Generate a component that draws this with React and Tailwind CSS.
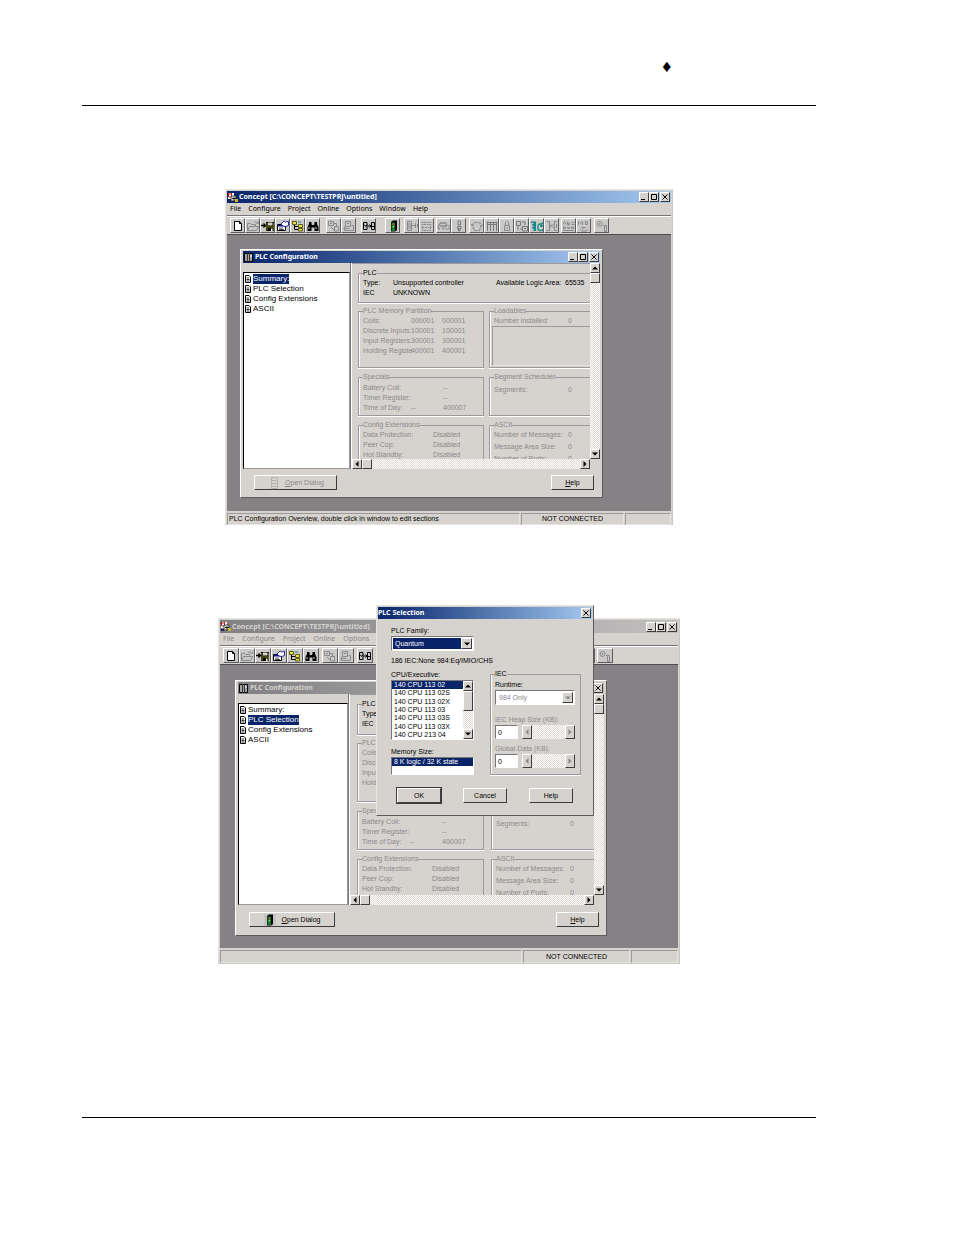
import React, { useState } from 'react';

const sections = ['Summary:', 'PLC Selection', 'Config Extensions', 'ASCII'];
const menus = ['File', 'Configure', 'Project', 'Online', 'Options', 'Window', 'Help'];
const cpus = [
  '140 CPU 113 02',
  '140 CPU 113 02S',
  '140 CPU 113 02X',
  '140 CPU 113 03',
  '140 CPU 113 03S',
  '140 CPU 113 03X',
  '140 CPU 213 04',
];

const raised = 'border border-t-white border-l-white border-r-[#3c3b3d] border-b-[#3c3b3d] bg-[#d6d3ce]';
const toolRaised = 'border border-t-white border-l-white border-r-[#5c5b5f] border-b-[#5c5b5f] bg-[#cbc9c8]';
const sunken = 'border border-t-[#77767a] border-l-[#77767a] border-r-white border-b-white';
const panel = 'border border-t-[#9b999c] border-l-[#9b999c] border-r-[#e6e4e0] border-b-[#e6e4e0]';
const dither = 'bg-[repeating-conic-gradient(#ffffff_0_25%,#dddad5_0_50%)] bg-[length:2px_2px]';

// sizes that differ between the two main windows
const normal = {
  frame: 'mx-[143px]',
  title: 'h-[12px]',
  menu: 'gap-[7px]',
  button: 'w-[15px]',
  gaps: ['', 'ml-[6px]', 'ml-[5px]', 'ml-[9px]', 'ml-[4px]', 'ml-[2px]', 'ml-[3px]', 'ml-[2px]', 'ml-[3px]'],
  desktop: 'pt-[14px] pb-[13px] pl-[13px] pr-[68px]',
  tree: 'w-[107px]',
  panel: 'h-[196px] pl-[6px]',
  plc: 'h-[34px]',
  memory: 'h-[61px]',
  columns: 'grid-cols-[126px_1fr] gap-x-[5px]',
  actions: 'pt-[6px] pb-[6px] pl-[11px] pr-[6px]',
  open: 'w-[83px]',
  status: 'h-[13px] grid-cols-[293px_1fr_46px]',
};

const large = {
  frame: 'mx-[136px]',
  title: 'h-[13px]',
  menu: 'gap-[8px]',
  button: 'w-[16px]',
  gaps: ['', 'ml-[3px]', 'ml-[3px]', 'ml-[6px]', 'ml-[3px]', 'ml-[1px]', 'ml-[2px]', 'ml-[2px]', 'ml-[2px]'],
  desktop: 'pt-[15px] pb-[12px] pl-[15px] pr-[71px]',
  tree: 'w-[110px]',
  panel: 'h-[201px] pl-[7px]',
  plc: 'h-[35px]',
  memory: 'h-[63px]',
  columns: 'grid-cols-[127px_1fr] gap-x-[7px]',
  actions: 'pt-[7px] pb-[7px] pl-[11px] pr-[5px]',
  open: 'w-[86px]',
  status: 'h-[15px] grid-cols-[302px_1fr_47px]',
};

const icons = {
  'New project': (
    <path d="M3.5 1.5h5l2 2v7h-7zM8.5 1.5v2h2" fill="#fff" stroke="#000" />
  ),
  'Open project': (
    <g fill="none" stroke="#8a898c">
      <path d="M1.5 10.5v-7h3l1 1h4v2M1.5 10.5l2-4h9l-2 4z" />
      <path d="M8 2.5c2-1.500 3-.5 3.500 1M12.500 1.500v2h-2" />
    </g>
  ),
  'Save project': (
    <g>
      <path d="M0 5.500h4M2.500 3.500l2 2-2 2" stroke="#000" fill="none" strokeWidth="1.400" />
      <path d="M5 2h8v9H5z" fill="#000" />
      <path d="M7 2.500h4.500v3H7z" fill="#d6d3ce" />
      <path d="M5.500 3v7.500h1V3zM12 3v7.500h.7V3zM6 6.500h6v1H6z" fill="#8a8a1c" />
      <path d="M10 8.500h1.500V11H10z" fill="#fff" />
    </g>
  ),
  Properties: (
    <g>
      <path d="M1.500 4.500h8v6h-8z" fill="#fff" stroke="#000" />
      <path d="M2 5h7v1.500H2z" fill="#14149a" />
      <path d="M3 8h4M3 9.500h5" stroke="#000" strokeWidth=".7" />
      <path d="M5 4l3-3 1.500 1 3-.5v4l-3 1L7 6z" fill="#fff" stroke="#14149a" strokeWidth=".9" />
    </g>
  ),
  'Project browser': (
    <g>
      <path d="M3.500 4v5.500H8M3.500 6.500H8" fill="none" stroke="#000" />
      <path d="M1.500 1.500h4v3h-4z" fill="#e6e04a" stroke="#5d5a14" />
      <path d="M7.500 4.500h4v3h-4zM7.500 8.500h4v2.500h-4z" fill="#e6e04a" stroke="#5d5a14" />
      <path d="M7 2h3" stroke="#148a8a" />
    </g>
  ),
  Search: (
    <g fill="#000">
      <path d="M3 2h2.500v2L6 5h2l.5-1V2H11v2l1.500 3v4H8.500V7.500h-3V11H1.500V7L3 4z" />
      <path d="M3 7v2M10 7v2" stroke="#fff" strokeWidth=".8" />
    </g>
  ),
  'Off-line PLC': (
    <g fill="none" stroke="#8a898c">
      <path d="M1.500 1.500h5v4h-5zM3 3.500h2M7.500 6.500h4v4.500h-4zM4 7l3 3M7 3.500h2.500V6" />
    </g>
  ),
  'Upload PLC': (
    <g fill="none" stroke="#8a898c">
      <path d="M3.500 1.500h5v5h-5zM1.500 8.500h6M9.500 5.500h2v5h-4M5 3.500h2M2.500 6.500v4h5" />
    </g>
  ),
  Compare: (
    <g fill="none" stroke="#000">
      <path d="M1.500 2.500h3.500v7H1.500zM9.500 2.500h3v7h-3zM2 4.500l1.500 2L5 4.500M10 6.500h2" />
      <path d="M5.500 6h3.500M7.500 4.500L9 6 7.500 7.500" />
    </g>
  ),
  'PLC Configuration': (
    <g>
      <path d="M5 2l2-1.500h4V10l-2 1.500H5z" fill="#000" />
      <path d="M5.500 2.500h3.500v8.500H5.500z" fill="#14782a" />
      <path d="M6.500 3.500h1.500V5H6.500z" fill="#e04a2a" />
      <path d="M6.500 6h1.500v1.500H6.500z" fill="#7ae04a" />
    </g>
  ),
  'Data types': (
    <g fill="none" stroke="#8a898c">
      <path d="M2.500 1.500h4v9h-4zM3 4h3M3 6h3M3 8h3M6.500 5.500h4M10.500 3v5M12.500 4v3" />
    </g>
  ),
  'Message log': (
    <g fill="none" stroke="#8a898c">
      <path d="M1.500 2.500h10M1.500 4.500h10M2.500 7.500h8v3h-8zM3 6l-1.500 2M10 6l2 2" strokeDasharray="2 .6" />
    </g>
  ),
  Animate: (
    <g fill="none" stroke="#8a898c">
      <path d="M1.500 9V6l2-3h5l1.500 3M3 6h6M3 9.500l-1-1M5.500 7.500l1.500 2" strokeWidth="1.300" />
      <circle cx="10.500" cy="7.500" r="2" />
    </g>
  ),
  Lock: (
    <path d="M6 1h2.500v4H6zM5.500 6.500h3.500v2H5.500zM6.500 9h1.500v2H6.500z" fill="none" stroke="#7a797c" />
  ),
  Refresh: (
    <path d="M4.500 2.500h5l2 3-2 5h-5l-2.500-5zM1 4.500l3 1M10 6.500l3-1.500" fill="none" stroke="#8a898c" strokeWidth="1.200" strokeDasharray="3 1" />
  ),
  Reference: (
    <g fill="none" stroke="#7a797c">
      <path d="M1.500 2.500h11M2.500 3v8M5.500 3v8M8.500 3v8M11.500 3v8M2 4.500h10" />
    </g>
  ),
  Padlock: (
    <path d="M4.500 5.500h5v5h-5zM5.500 5V2.500l1-1h1l1 1V5M7 7v2" fill="none" stroke="#8a898c" />
  ),
  Transfer: (
    <path d="M1.500 1.500h4v4h-4zM3 6v4M7 2h3v3M7.500 6.500h5v4.500h-5zM9 8.500h2M5 9h2" fill="none" stroke="#7a797c" />
  ),
  Connect: (
    <g fill="none" stroke="#178a8c">
      <path d="M1 1.500h5V11H3.500V8.500H2V7h1.500V5.500H2V4h1.500V3H1z" fill="#178a8c" stroke="none" />
      <path d="M13 2.500l-1.500 1.500h-2L8 5.500v4l1.500 1H12l1-1.500M10 6h3M11.500 4.500V7" strokeWidth="1.300" />
    </g>
  ),
  Disconnect: (
    <path d="M1.500 1.500h3v9h-3M4.500 4l4 4M8.500 4l-4 4M12 1.500H9.500v9H12M11.500 4v4" fill="none" stroke="#8a898c" />
  ),
  Variables: (
    <path d="M1 4.500l1.500-3 1.500 3M5.500 1.500v3h2v-1.500h-2M9.500 2.500h3M9.500 4.500h3M1.500 7h2v1.500h-2zM5.500 7h2v1.500h-2zM9.500 7h2v1.500h-2zM1 10.500h11" fill="none" stroke="#8a898c" />
  ),
  'Memory map': (
    <path d="M1.500 5V1.500l2 2 2-2V5M8.500 1.500v3h2v-3h-2M4 7.500h5M3 9.500l2 1.500h4l2-1.500M6 8v1.500" fill="none" stroke="#8a898c" />
  ),
  Info: (
    <g fill="none" stroke="#8a898c">
      <circle cx="4.500" cy="4" r="2.500" />
      <path d="M4.500 3v2M9.500 5.500h2v6h-2zM8 5.500h2" />
    </g>
  ),
};

const toolbar = [
  ['New project', 'Open project', 'Save project', 'Properties', 'Project browser', 'Search'],
  ['Off-line PLC', 'Upload PLC'],
  ['Compare'],
  ['PLC Configuration'],
  ['Data types', 'Message log'],
  ['Animate', 'Lock'],
  ['Refresh', 'Reference', 'Padlock', 'Transfer', 'Connect', 'Disconnect'],
  ['Variables', 'Memory map'],
  ['Info'],
];

const CaptionButton = ({ label, children }) => (
  <button type="button" aria-label={label} className={`flex h-[10px] w-[10px] items-center justify-center ${raised}`}>
    <svg viewBox="0 0 8 8" className="h-[8px] w-[8px]" fill="none" stroke="#000">
      {children}
    </svg>
  </button>
);

const CloseButton = () => (
  <CaptionButton label="Close">
    <path d="M1.500 1.500l5 5M6.500 1.500l-5 5" />
  </CaptionButton>
);

const CaptionButtons = () => (
  <div className="flex">
    <CaptionButton label="Minimize">
      <path d="M1 6.500h4" />
    </CaptionButton>
    <CaptionButton label="Maximize">
      <path d="M1.500 1.500h5v5h-5z" />
    </CaptionButton>
    <div className="w-[1px]" />
    <CloseButton />
  </div>
);

const TitleBar = ({ title, icon, active, size, children }) => (
  <div
    className={`flex items-center gap-[1px] pr-[1px] ${size} ${
      active ? 'bg-linear-to-r from-[#0a246a] to-[#a6caf0] text-white' : 'bg-linear-to-r from-[#818083] to-[#c2c0bf] text-[#d6d3ce]'
    }`}
  >
    {icon}
    <h2 className="flex-1 overflow-hidden font-['Noto_Sans',sans-serif] text-[7px] leading-[10px] font-bold whitespace-nowrap">{title}</h2>
    {children}
  </div>
);

const AppIcon = () => (
  <svg viewBox="0 0 11 11" className="h-[11px] w-[11px]">
    <path d="M1 1h6v6H1z" fill="#fff" />
    <path d="M0 2h5M1.500 1v4M4.500 1v3M2 5h4" stroke="#b02020" fill="none" />
    <path d="M4 4h5v5H4z" fill="#e8e4dc" stroke="#222" strokeWidth=".8" />
    <path d="M5 6.500h4M7 5v4" stroke="#222" />
    <path d="M8 7h3v3H8z" fill="#c8b430" />
    <path d="M1 8h3v2H1z" fill="#1c1c60" />
  </svg>
);

const RackIcon = () => (
  <svg viewBox="0 0 11 11" className="h-[11px] w-[11px]">
    <path d="M1.500 1.500h8v8h-8z" fill="#a5a3a5" stroke="#000" />
    <path d="M4.500 1v9M6.500 1v9" stroke="#333" />
    <path d="M8 3v2" stroke="#fff" />
  </svg>
);

const PageIcon = () => (
  <svg viewBox="0 0 8 8" className="h-[8px] w-[8px]">
    <path d="M1.500 .5h3.500l1.500 1.500v5.500h-5z" fill="#fff" stroke="#000" />
    <path d="M2.500 3h2.500M2.500 4.500h3M2.500 6h3" stroke="#000" strokeWidth=".8" />
  </svg>
);

const arrows = {
  up: 'M1 5.500h6L4 2.500z',
  down: 'M1 2.500h6L4 5.500z',
  left: 'M5.500 1v6L2.500 4z',
  right: 'M2.500 1v6L5.500 4z',
};

const Arrow = ({ dir, disabled }) => (
  <svg viewBox="0 0 8 8" className="h-[8px] w-[8px]" fill={disabled ? '#87868a' : '#000'}>
    <path d={arrows[dir]} />
  </svg>
);

const ScrollButton = ({ dir, disabled }) => (
  <button
    type="button"
    aria-label={`Scroll ${dir}`}
    disabled={disabled}
    className={`flex min-h-[10px] min-w-[10px] items-center justify-center ${raised}`}
  >
    <Arrow dir={dir} disabled={disabled} />
  </button>
);

const VScroll = ({ thumb = 'h-[10px]' }) => (
  <div className={`flex w-[10px] flex-col ${dither}`}>
    <ScrollButton dir="up" />
    <div className={`${thumb} ${raised}`} />
    <div className="flex-1" />
    <ScrollButton dir="down" />
  </div>
);

const HScroll = ({ disabled }) => (
  <div className={`flex flex-1 ${dither}`}>
    <ScrollButton dir="left" disabled={disabled} />
    {!disabled && <div className={`w-[10px] ${raised}`} />}
    <div className="flex-1" />
    <ScrollButton dir="right" disabled={disabled} />
  </div>
);

const Group = ({ title, className = '', children }) => (
  <fieldset
    className={`min-w-0 border border-[#9b999c] pl-[4px] shadow-[inset_1px_0_0_#fff,0_1px_0_#fff] ${className}`}
  >
    <legend className="bg-[#d6d3ce] leading-[8px]">{title}</legend>
    {children}
  </fieldset>
);

const Rows = ({ rows, className }) => (
  <div className={`grid leading-[10px] whitespace-nowrap ${className}`}>
    {rows.flat().map((cell, i) => (
      <span key={i}>{cell}</span>
    ))}
  </div>
);

const Overview = ({ size }) => (
  <div className={`min-w-0 flex-1 overflow-hidden border-t border-[#9b999c] pt-[5px] text-[#8b898b] ${size.panel}`}>
    <Group title="PLC" className={`mb-[4px] border-r-0 text-black ${size.plc}`}>
      <Rows
        className="grid-cols-[30px_103px_69px_auto] pt-[1px]"
        rows={[
          ['Type:', 'Unsupported controller', 'Available Logic Area:', '65535'],
          ['IEC', 'UNKNOWN', '', ''],
        ]}
      />
    </Group>
    <div className={`grid gap-y-[5px] ${size.columns}`}>
      <Group title="PLC Memory Partition" className={size.memory}>
        <Rows
          className="grid-cols-[48px_31px_auto] pt-[1px]"
          rows={[
            ['Coils:', '000001', '000001'],
            ['Discrete Inputs:', '100001', '100001'],
            ['Input Registers:', '300001', '300001'],
            ['Holding Registe', '400001', '400001'],
          ]}
        />
      </Group>
      <Group title="Loadables" className={`flex flex-col border-r-0 ${size.memory}`}>
        <Rows className="grid-cols-[74px_auto] pt-[1px]" rows={[['Number installed:', '0']]} />
        <div className={`mr-[-1px] ml-[-2px] h-[40px] ${panel}`} />
      </Group>
      <Group title="Specials" className="h-[43px]">
        <Rows
          className="grid-cols-[48px_32px_auto] pt-[2px]"
          rows={[
            ['Battery Coil:', '', '--'],
            ['Timer Register:', '', '--'],
            ['Time of Day:', '--', '400007'],
          ]}
        />
      </Group>
      <Group title="Segment Scheduler" className="h-[43px] border-r-0">
        <Rows className="grid-cols-[74px_auto] pt-[4px]" rows={[['Segments:', '0']]} />
      </Group>
      <Group title="Config Extensions" className="h-[60px]">
        <Rows
          className="grid-cols-[70px_auto] pt-[1px]"
          rows={[
            ['Data Protection:', 'Disabled'],
            ['Peer Cop:', 'Disabled'],
            ['Hot Standby:', 'Disabled'],
          ]}
        />
      </Group>
      <Group title="ASCII" className="h-[60px] border-r-0">
        <Rows
          className="grid-cols-[74px_auto] gap-y-[2px] pt-[1px]"
          rows={[
            ['Number of Messages:', '0'],
            ['Message Area Size:', '0'],
            ['Number of Ports:', '0'],
          ]}
        />
      </Group>
    </div>
  </div>
);

const PlcConfiguration = ({ size, active, selected, onSelect }) => (
  <div className="border border-t-white border-l-white border-r-[#5c5b5f] border-b-[#5c5b5f] bg-[#d6d3ce] px-[2px] py-[1px]">
    <TitleBar title="PLC Configuration" icon={<RackIcon />} active={active} size="h-[12px]">
      <CaptionButtons />
    </TitleBar>
    <div className="flex">
      <div className={`flex pt-[9px] ${size.tree}`}>
        <ul className="flex-1 border border-t-black border-l-black border-r-[#9b999c] border-b-[#9b999c] bg-white pt-[1px] font-['Liberation_Sans',sans-serif] text-[8px]">
          {sections.map((name) => (
            <li key={name}>
              <button type="button" onClick={() => onSelect(name)} className="flex h-[10px] items-center gap-[1px]">
                <PageIcon />
                <span className={`leading-[10px] ${name === selected ? 'bg-[#0a246a] text-white' : ''}`}>{name}</span>
              </button>
            </li>
          ))}
        </ul>
      </div>
      <div className="w-[2px] border-l border-[#77767a] bg-white" />
      <div className="min-w-0 flex-1">
        <div className="flex">
          <Overview size={size} />
          <VScroll />
        </div>
        <div className="flex pr-[10px]">
          <HScroll />
        </div>
      </div>
    </div>
    <div className={`flex justify-between ${size.actions}`}>
      <button
        type="button"
        disabled={active}
        className={`flex h-[15px] items-center justify-center gap-[6px] text-black disabled:text-[#8b898b] ${raised} ${size.open}`}
      >
        <svg viewBox="0 0 12 12" className="h-[12px] w-[12px]">
          {active ? (
            <path d="M4.500 .5h6v11h-6zM5 3.500h5M5 6.500h5M5 9.500h5" fill="none" stroke="#b5b2ae" />
          ) : (
            <g>
              <path d="M0 0h12v12H0z" fill="#c6c4c6" />
              <g transform="translate(-2)">{icons['PLC Configuration']}</g>
            </g>
          )}
        </svg>
        <span>
          <u>O</u>pen Dialog
        </span>
      </button>
      <button type="button" className={`h-[15px] w-[43px] ${raised}`}>
        <u>H</u>elp
      </button>
    </div>
  </div>
);

const ConceptWindow = ({ size, active, initial, status, children }) => {
  const [selected, setSelected] = useState(initial);

  return (
    <section
      className={`relative border border-t-[#e6e4e0] border-l-[#e6e4e0] border-r-[#c9c7c3] border-b-[#c9c7c3] bg-[#d6d3ce] p-[1px] pb-0 ${size.frame}`}
    >
      <TitleBar title="Concept [C:\CONCEPT\TESTPRJ\untitled]" icon={<AppIcon />} active={active} size={size.title}>
        <CaptionButtons />
      </TitleBar>
      <nav
        className={`flex h-[13px] items-center border-b border-[#77767a] pl-[3px] font-['Noto_Sans',sans-serif] text-[7px] ${size.menu} ${
          active ? '' : 'text-[#87868a]'
        }`}
      >
        {menus.map((name) => (
          <button key={name} type="button">
            {name}
          </button>
        ))}
      </nav>
      <div className="flex border-t border-white py-[1px] pl-[3px]">
        {toolbar.map((group, i) => (
          <div key={group[0]} className={`flex ${size.gaps[i]}`}>
            {group.map((name) => (
              <button
                key={name}
                type="button"
                aria-label={name}
                className={`flex h-[15px] items-center justify-center ${toolRaised} ${size.button}`}
              >
                <svg viewBox="0 0 14 12" className="h-[12px] w-[14px] shrink-0">
                  {icons[name]}
                </svg>
              </button>
            ))}
          </div>
        ))}
      </div>
      <div className={`border-t border-[#4d4c50] bg-[#848284] ${size.desktop}`}>
        <PlcConfiguration size={size} active={active} selected={selected} onSelect={setSelected} />
      </div>
      <footer className={`grid gap-x-[1px] pt-[2px] ${size.status}`}>
        <p className={`flex items-center pl-[1px] ${panel}`}>{status}</p>
        <p className={`flex items-center justify-center ${panel}`}>NOT CONNECTED</p>
        <p className={panel} />
      </footer>
      {children}
    </section>
  );
};

const Dropdown = ({ id, options, disabled, className }) => (
  <div className={`flex h-[15px] bg-white p-[1px] ${sunken}`}>
    <select
      id={id}
      disabled={disabled}
      className={`min-w-0 flex-1 appearance-none pl-[2px] leading-[10px] disabled:opacity-100 ${className}`}
    >
      {options.map((option) => (
        <option key={option}>{option}</option>
      ))}
    </select>
    <span className={`pointer-events-none flex w-[11px] items-center justify-center ${raised}`}>
      <Arrow dir="down" disabled={disabled} />
    </span>
  </div>
);

const SizeField = ({ id, label }) => (
  <div>
    <label htmlFor={id} className="block leading-[10px] text-[#8b898b]">
      {label}
    </label>
    <div className="flex gap-[4px]">
      <input id={id} defaultValue="0" className={`h-[14px] w-[23px] bg-white pl-[2px] leading-[10px] ${sunken}`} />
      <HScroll disabled />
    </div>
  </div>
);

const PlcSelection = () => {
  const [cpu, setCpu] = useState(cpus[0]);

  return (
    <div
      role="dialog"
      aria-label="PLC Selection"
      className="absolute top-[-14px] left-[157px] w-[218px] border border-t-[#e6e4e0] border-l-[#e6e4e0] border-r-[#5c5b5f] border-b-[#5c5b5f] bg-[#d6d3ce] p-[1px] text-black"
    >
      <TitleBar title="PLC Selection" active size="h-[12px]">
        <CloseButton />
      </TitleBar>
      <form className="pt-[7px] pr-[11px] pb-[11px] pl-[13px]" onSubmit={(e) => e.preventDefault()}>
        <div className="w-[83px]">
          <label htmlFor="family" className="block leading-[10px]">
            PLC Family:
          </label>
          <Dropdown id="family" options={['Quantum', 'Compact', 'Momentum', 'Atrium']} className="bg-[#0a246a] text-white" />
        </div>
        <p className="mt-[5px] leading-[10px] whitespace-nowrap">186 IEC:None 984:Eq/IMIO/CHS</p>
        <div className="mt-[4px] grid grid-cols-[83px_1fr] gap-x-[16px]">
          <div>
            <p className="leading-[10px]">CPU/Executive:</p>
            <div className={`flex h-[60px] bg-white ${sunken}`}>
              <ul role="listbox" aria-label="CPU/Executive" className="flex flex-1 flex-col">
                {cpus.map((name) => (
                  <li
                    key={name}
                    role="option"
                    aria-selected={name === cpu}
                    onClick={() => setCpu(name)}
                    className={`flex flex-1 items-center pl-[2px] leading-[8px] ${name === cpu ? 'bg-[#0a246a] text-white' : ''}`}
                  >
                    {name}
                  </li>
                ))}
              </ul>
              <VScroll thumb="h-[20px]" />
            </div>
            <p className="mt-[7px] leading-[10px]">Memory Size:</p>
            <ul role="listbox" aria-label="Memory Size" className={`h-[18px] bg-white ${sunken}`}>
              <li role="option" aria-selected="true" className="bg-[#0a246a] pl-[2px] leading-[8px] text-white">
                8 K logic / 32 K state
              </li>
            </ul>
          </div>
          <Group title="IEC" className="pr-[5px]">
            <label htmlFor="runtime" className="mt-[2px] block leading-[10px]">
              Runtime:
            </label>
            <Dropdown id="runtime" options={['984 Only']} disabled className="text-[#8b898b]" />
            <div className="mt-[10px] flex flex-col gap-[5px]">
              <SizeField id="heap" label="IEC Heap Size (KB):" />
              <SizeField id="global" label="Global Data (KB):" />
            </div>
          </Group>
        </div>
        <div className="mt-[13px] flex gap-[22px] pl-[6px]">
          <button type="submit" className={`h-[15px] w-[44px] outline outline-[#3c3b3d] ${raised}`}>
            OK
          </button>
          <button type="button" className={`h-[15px] w-[44px] ${raised}`}>
            Cancel
          </button>
          <button type="button" className={`h-[15px] w-[44px] ${raised}`}>
            Help
          </button>
        </div>
      </form>
    </div>
  );
};

const App = () => {
  return (
    <main className="bg-white pt-[60px] pr-[138px] pb-[117px] pl-[82px] font-['Liberation_Sans',sans-serif] text-[7px] leading-[10px] text-black">
      <header className="flex h-[46px] justify-end border-b border-black pr-[143px]">
        <span className="font-['DejaVu_Sans',sans-serif] text-[14px] leading-[14px]">♦</span>
      </header>
      <div className="mt-[83px]">
        <ConceptWindow
          size={normal}
          active
          initial="Summary:"
          status="PLC Configuration Overview, double click in window to edit sections"
        />
      </div>
      <div className="mt-[93px]">
        <ConceptWindow size={large} active={false} initial="PLC Selection" status="">
          <PlcSelection />
        </ConceptWindow>
      </div>
      <hr className="mt-[153px] border-black" />
    </main>
  );
};

export default App;
